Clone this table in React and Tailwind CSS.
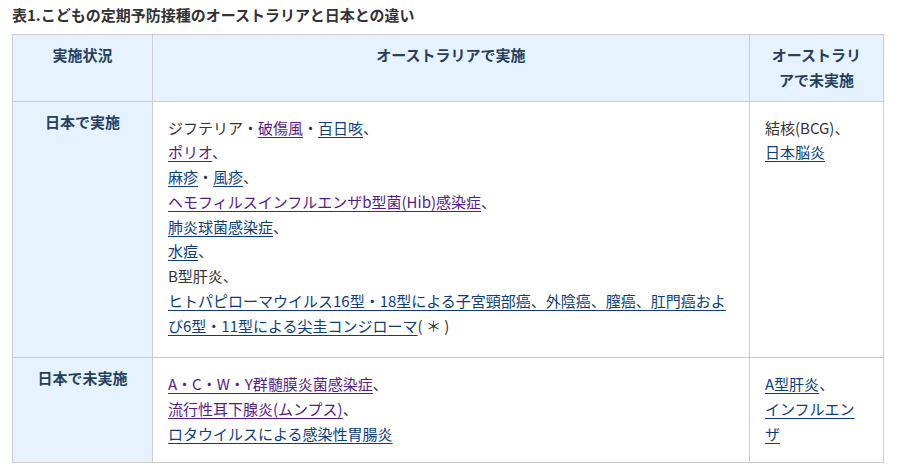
const font = { fontFamily: '"Noto Sans CJK JP", "Noto Sans", sans-serif' };

const Visited = ({ children }) => (
  <a href="#" className="text-[#551a8b] underline underline-offset-[3px]">
    {children}
  </a>
);

const Link = ({ children }) => (
  <a href="#" className="text-[#0b3d80] underline underline-offset-[3px]">
    {children}
  </a>
);

const Line = ({ children }) => <div>{children}</div>;

export default function App() {
  return (
    <div className="bg-white w-[898px] h-[470px] px-3 text-[#333]" style={font}>
      <h3 className="pt-[3px] mb-[7px] text-[15px] leading-6 font-bold text-[#333]">
        表1.こどもの定期予防接種のオーストラリアと日本との違い
      </h3>

      <table className="w-[872px] table-fixed border-collapse border border-[#cccccc] text-[15px] leading-[24.75px]">
        <thead>
          <tr className="bg-[#e6f3ff] text-[#24405f]">
            <th className="w-[140px] border border-[#cccccc] px-4 py-2 align-top font-bold">実施状況</th>
            <th className="border border-[#cccccc] px-4 py-2 align-top font-bold">オーストラリアで実施</th>
            <th className="w-[134px] border border-[#cccccc] px-[16px] py-2 align-top font-bold">
              オーストラリアで未実施
            </th>
          </tr>
        </thead>
        <tbody>
          <tr>
            <th className="bg-[#e6f3ff] text-[#24405f] border border-[#cccccc] px-4 py-2 align-top font-bold">
              日本で実施
            </th>
            <td className="border border-[#cccccc] pl-[15px] pr-4 pt-[14px] pb-[19px] align-top">
              <Line>
                ジフテリア・<Visited>破傷風</Visited>・<Link>百日咳</Link>、
              </Line>
              <Line>
                <Visited>ポリオ</Visited>、
              </Line>
              <Line>
                <Link>麻疹</Link>・<Link>風疹</Link>、
              </Line>
              <Line>
                <Visited>ヘモフィルスインフルエンザb型菌(Hib)感染症</Visited>、
              </Line>
              <Line>
                <Link>肺炎球菌感染症</Link>、
              </Line>
              <Line>
                <Link>水痘</Link>、
              </Line>
              <Line>B型肝炎、</Line>
              <div>
                <Link>
                  ヒトパピローマウイルス16型・18型による子宮頸部癌、外陰癌、膣癌、肛門癌および6型・11型による尖圭コンジローマ
                </Link>
                ( ＊ )
              </div>
            </td>
            <td className="border border-[#cccccc] pl-[15px] pr-4 pt-[14px] pb-[19px] align-top">
              <Line>結核(BCG)、</Line>
              <Line>
                <Link>日本脳炎</Link>
              </Line>
            </td>
          </tr>
          <tr>
            <th className="bg-[#e6f3ff] text-[#24405f] border border-[#cccccc] px-4 py-2 align-top font-bold">
              日本で未実施
            </th>
            <td className="border border-[#cccccc] pl-[15px] pr-4 pt-[14px] pb-[15px] align-top">
              <Line>
                <Visited>A・C・W・Y群髄膜炎菌感染症</Visited>、
              </Line>
              <Line>
                <Visited>流行性耳下腺炎(ムンプス)</Visited>、
              </Line>
              <Line>
                <Link>ロタウイルスによる感染性胃腸炎</Link>
              </Line>
            </td>
            <td className="border border-[#cccccc] pl-[15px] pr-4 pt-[14px] pb-[15px] align-top">
              <Line>
                <Link>A型肝炎</Link>、
              </Line>
              <Line>
                <Link>インフルエンザ</Link>
              </Line>
            </td>
          </tr>
        </tbody>
      </table>
    </div>
  );
}
